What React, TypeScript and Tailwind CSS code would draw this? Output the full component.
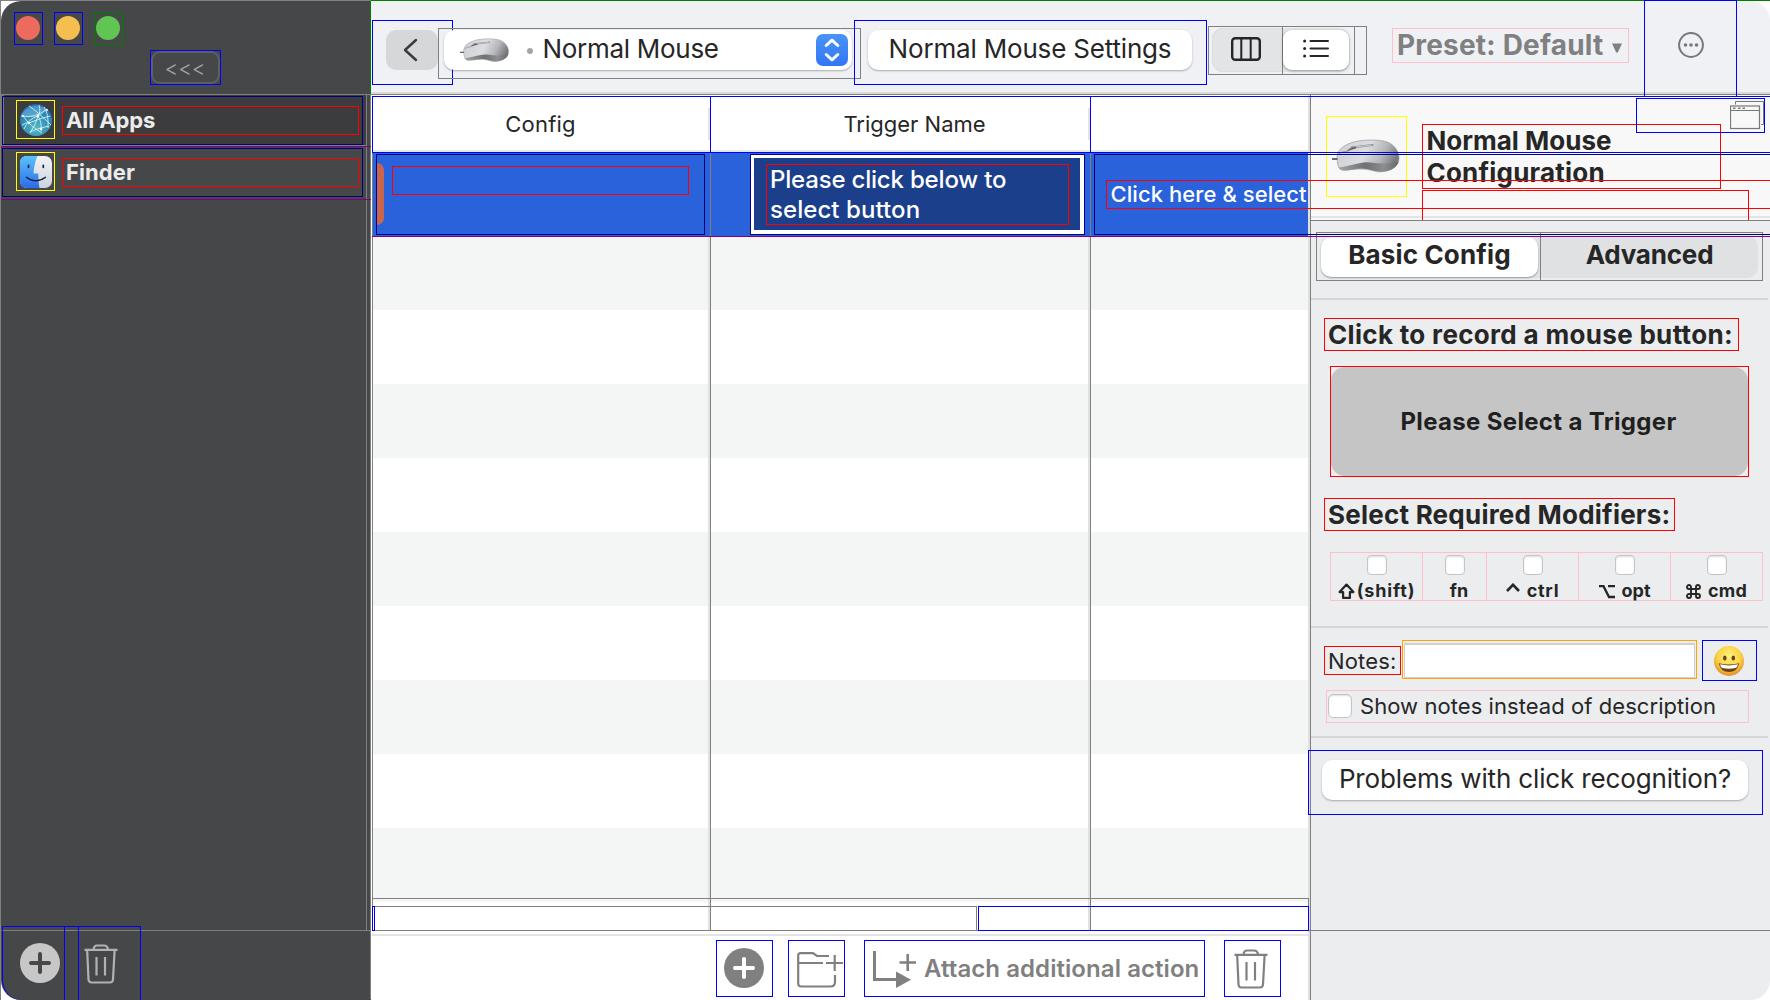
import React from 'react';

function MouseIcon({ className, id }: { className: string; id: string }) {
  return (
    <svg className={className} viewBox="0 0 70 35" preserveAspectRatio="none" fill="none">
      <defs>
        <linearGradient id={`${id}-top`} x1="10" y1="4" x2="60" y2="30" gradientUnits="userSpaceOnUse">
          <stop offset="0" stopColor="#d0d1d4" />
          <stop offset="0.45" stopColor="#dcdde0" />
          <stop offset="0.75" stopColor="#b4b5b9" />
          <stop offset="1" stopColor="#77787c" />
        </linearGradient>
        <linearGradient id={`${id}-side`} x1="6" y1="28" x2="68" y2="28" gradientUnits="userSpaceOnUse">
          <stop offset="0" stopColor="#a5a6aa" />
          <stop offset="0.45" stopColor="#6f7074" />
          <stop offset="0.75" stopColor="#8d8e92" />
          <stop offset="1" stopColor="#66676b" />
        </linearGradient>
      </defs>
      <path d="M7 29 Q10 33 20 31 Q34 29.5 46 33.5 Q60 34.5 67 25 Z" fill="#000" opacity="0.18" />
      <path d="M5.3 16C7 9 14 5 24 2.5C34 .5 48 .5 56 3C64 6 68 13 68 19C68 26 62 32 50 32.5C42 32.5 38 29.5 31 29.5C22 29.5 15 32 10 31C6 30 5 24 5.3 16Z" fill={`url(#${id}-top)`} stroke="#9a9b9f" strokeWidth="0.7" />
      <path d="M6.3 28.5C18 27 26 23.5 36 23.2C48 24 58 26.5 67.6 22.5C66 28 60 32.3 50 32.4C42 32.4 38 29.4 31 29.4C22 29.4 15 32 10 31Q7.5 30.4 6.3 28.5Z" fill={`url(#${id}-side)`} />
      <path d="M20 8.5L41 6" stroke="#8b8c90" strokeWidth="2.2" strokeLinecap="round" />
      <path d="M22 8.2L40 6.1" stroke="#d5d6d9" strokeWidth="0.9" strokeLinecap="round" />
      <path d="M14 13Q17 8.5 24 7.5L24.500 9.500Q19 10.500 14 13Z" fill="#6a6b6f" />
      <path d="M6.500 15Q10 12.500 14 12.500" stroke="#8b8c90" strokeWidth="0.9" />
      <path d="M0 20H5.500" stroke="#4a4a4c" strokeWidth="1.6" />
    </svg>
  );
}

function TrashIcon({ className }: { className: string }) {
  return (
    <svg className={className} viewBox="0 0 34 40" fill="none" stroke="currentColor" strokeWidth="2.2">
      <path d="M0.5 5.8H33.5" />
      <path d="M9.5 5.5Q10 1.5 13 1.5H20Q23.5 1.5 24 5.5" />
      <path d="M3.2 6.5L4.5 35.5Q4.8 38.5 7.5 38.5H26Q28.7 38.5 29 35.5L30.6 6.5" />
      <path d="M12.5 13V31.5M21 13V31.5" />
    </svg>
  );
}

function PlusCircle({ className, stroke }: { className: string; stroke: string }) {
  return (
    <svg className={className} viewBox="0 0 40 40">
      <circle cx="20" cy="20" r="20" fill="currentColor" />
      <path d="M20 11V29M11 20H29" stroke={stroke} strokeWidth="4" strokeLinecap="round" />
    </svg>
  );
}

function GlobeIcon() {
  return (
    <svg className="size-8" viewBox="0 0 32 32" fill="none">
      <defs>
        <radialGradient id="globe-fill" cx="0.5" cy="0.75" r="0.78">
          <stop offset="0" stopColor="#55b9bd" />
          <stop offset="0.5" stopColor="#3592b8" />
          <stop offset="1" stopColor="#1f62aa" />
        </radialGradient>
      </defs>
      <circle cx="16" cy="16" r="16" fill="url(#globe-fill)" />
      <path d="M5 6Q16 -3 27 6Q22 12 15 13Q6 13 1 11Z" fill="#8cd0f5" opacity="0.4" />
      <g stroke="#c9f0fb" strokeWidth="0.9">
        <path d="M1 12Q15 15 27 5M9 2Q18 8 31 21M19 1Q21 8 18 12Q8 15 4 25M18 12Q16 20 10 29M18 12Q22 18 21 27M3 12Q10 22 22 29M9 19Q18 15 30 12M2 21Q6 18 9 19M10 28Q18 24 29 22M24 3Q29 10 28 24" />
      </g>
      <g fill="#fff"><circle cx="18" cy="12" r="1.3" /><circle cx="9" cy="19" r="1.2" /><circle cx="21" cy="25" r="1.3" /><circle cx="27" cy="6" r="1" /><circle cx="3" cy="12" r="1" /></g>
    </svg>
  );
}

function FinderIcon() {
  return (
    <svg className="size-8" viewBox="0 0 32 32" fill="none">
      <defs>
        <linearGradient id="finder-l" x1="0" y1="0" x2="0" y2="32" gradientUnits="userSpaceOnUse"><stop stopColor="#5bc3f8" /><stop offset="1" stopColor="#2d6bea" /></linearGradient>
        <linearGradient id="finder-r" x1="0" y1="0" x2="0" y2="32" gradientUnits="userSpaceOnUse"><stop stopColor="#f3f3f6" /><stop offset="1" stopColor="#ccd3df" /></linearGradient>
      </defs>
      <rect width="32" height="32" rx="7" fill="url(#finder-r)" />
      <path d="M7 0H17.5Q14 8 13.5 17.5H18.3Q18 25 19.5 32H7Q0 32 0 25V7Q0 0 7 0Z" fill="url(#finder-l)" />
      <path d="M8.5 9.3V11.3M23.3 9.3V11.3" stroke="#15223c" strokeWidth="1.7" strokeLinecap="round" />
      <path d="M6.5 21.3Q15.5 28.5 25.5 21.3" stroke="#15223c" strokeWidth="1.4" strokeLinecap="round" />
    </svg>
  );
}

function GrinIcon() {
  return (
    <svg className="size-[30px]" viewBox="0 0 30 30">
      <defs>
        <radialGradient id="grin" cx="0.5" cy="0.35" r="0.65"><stop stopColor="#fff27a" /><stop offset="0.6" stopColor="#fbd147" /><stop offset="1" stopColor="#e0902b" /></radialGradient>
      </defs>
      <circle cx="15" cy="15" r="15" fill="url(#grin)" />
      <ellipse cx="10.8" cy="12" rx="1.8" ry="2.5" fill="#6b3f10" />
      <ellipse cx="19.3" cy="12" rx="1.8" ry="2.5" fill="#6b3f10" />
      <path d="M4.8 17.3Q15 19.8 25.2 17.3Q23.5 26 15 26Q6.5 26 4.8 17.3Z" fill="#6b4417" />
      <path d="M6 18.3Q15 20.5 24 18.3Q23.5 21.5 21.5 22Q15 23.3 8.5 22Q6.5 21.5 6 18.3Z" fill="#fff" />
    </svg>
  );
}

function SidebarRow({ icon, label, className = '' }: { icon: React.ReactNode; label: string; className?: string }) {
  return (
    <div className="ml-px mt-px flex h-[49px] w-[361px] items-start gap-[7px] border border-[#000080] pl-[13px] pt-[3px]">
      <div className="flex size-[39px] shrink-0 items-center justify-center border border-[#ffff00]">{icon}</div>
      <div className={`mt-[6px] h-[29px] w-[297px] border border-[#ff0000] pl-[3px] text-[22px] font-bold leading-[26px] ${className}`}>{label}</div>
    </div>
  );
}

function Sidebar() {
  return (
    <aside className="h-full w-[371px] shrink-0 border-l border-t border-[#808080]">
      <div className="flex h-full flex-col rounded-l-[20px] bg-[#464749] text-[#ececec]">
        <div className="h-[93px] border-r border-[#008000] pl-[13px] pt-[11px]">
          <div className="flex gap-[11px]">
            <div className="h-[33px] w-[29px] border border-[#0000ff] pl-px pt-[3px]"><div className="size-6 rounded-full bg-[#ed6a5e]" /></div>
            <div className="h-[33px] w-[29px] border border-[#0000ff] pl-px pt-[3px]"><div className="size-6 rounded-full bg-[#f5bf4f]" /></div>
            <div className="h-[33px] w-[29px] border border-[#008000] pl-px pt-[3px]"><div className="size-6 rounded-full bg-[#61c554]" /></div>
          </div>
          <div className="ml-[136px] mt-[5px] h-[35px] w-[71px] border border-[#0000ff]">
            <div className="flex h-[33px] items-center justify-center rounded-[9px] border-2 border-[#5e5f62] pr-px pt-[3px] text-[21px] font-light text-[#a4a5a6]">
              &lt;&lt;&lt;
            </div>
          </div>
        </div>
        <div className="flex h-[836px] border-r border-t border-[#808080]">
          <div className="w-[366px] border-r border-[#808080]">
            <div className="-mr-[5px] h-[52px] border-b border-[#800080]">
              <div className="h-[51px] w-[365px] border-b border-b-[#808080] bg-[#3c3c3e] shadow-[inset_4px_0_0_-1px_#77787a]">
                <div className="h-px" />
                <div className="-mt-px"><SidebarRow icon={<GlobeIcon />} label="All Apps" className="tracking-[-0.1px]" /></div>
              </div>
            </div>
            <div className="-mr-[5px] h-[52px] border-b border-[#800080]">
              <SidebarRow icon={<FinderIcon />} label="Finder" className="tracking-[0.1px]" />
            </div>
          </div>
        </div>
        <div className="h-[69px] border-r border-t border-[#808080] pl-px">
          <div className="-mt-[5px] flex h-[74px]">
            <div className="w-[63px] rounded-bl-[20px] border border-b-0 border-[#0000ff] pl-[17px] pt-4 text-[#c7c7c8]"><PlusCircle className="size-10" stroke="#464749" /></div>
            <div className="w-[13px] border-t border-[#0000ff]" />
            <div className="w-[63px] border border-b-0 border-[#0000ff] pl-[5px] pt-[17px] text-[#b2b2b3]"><TrashIcon className="h-10 w-[34px]" /></div>
          </div>
        </div>
      </div>
    </aside>
  );
}

function Toolbar() {
  return (
    <header className="h-[95px] border-b border-t border-b-[#808080] border-t-[#008000] text-[26px] text-[#262626]">
      <div className="flex h-[93px] items-start rounded-tr-[20px] border-b-2 border-[#d8d9db] bg-[#f0f1f4] pl-px">
        <div className="mt-[19px] h-[65px] w-[81px] border border-[#0000ff] pl-[13px] pt-[9px]">
          <div className="flex h-10 w-[52px] items-center justify-center rounded-[10px] bg-[#d6d7d9]">
            <svg className="-ml-1 h-6 w-4" viewBox="0 0 16 24" fill="none" stroke="#3a3a3b" strokeWidth="2.400" strokeLinecap="round" strokeLinejoin="round">
              <path d="M14 2L3 12L14 22" />
            </svg>
          </div>
        </div>
        <div className="-ml-[15px] mt-[27px] h-[51px] w-[423px] border border-[#808080] pl-[5px] pt-px">
          <div className="flex h-10 w-[408px] items-center rounded-[10px] bg-white pl-4 pr-1 shadow-[0_1px_2px_rgba(0,0,0,0.3)]">
            <MouseIcon id="tb" className="h-[25px] w-[50px]" />
            <span className="ml-[17px] mt-px size-[6px] rounded-full bg-[#a5a5a5]" />
            <span className="-mt-[3px] ml-[9.5px] flex-1 leading-9 tracking-[-0.29px]">Normal Mouse</span>
            <span className="flex size-8 items-center justify-center rounded-[7px] bg-linear-to-b from-[#4a94f8] to-[#3175f6]">
              <svg className="h-6 w-[18px]" viewBox="0 0 18 24" fill="none" stroke="#fff" strokeWidth="3" strokeLinecap="round" strokeLinejoin="round">
                <path d="M3.200 7.500L9 2.200L14.800 7.500M3.200 16.500L9 21.800L14.800 16.500" />
              </svg>
            </span>
          </div>
        </div>
        <div className="-ml-[7px] mt-[19px] h-[65px] w-[353px] border border-[#0000ff] pl-[13px] pt-[9px]">
          <div className="h-10 w-[324px] rounded-[10px] bg-white text-center leading-[37px] tracking-[-0.18px] shadow-[0_1px_2px_rgba(0,0,0,0.3)]">Normal Mouse Settings</div>
        </div>
        <div className="ml-px mt-[25px] grid h-[49px] w-[159px] grid-cols-[74px_72px_11px] border border-[#808080]">
          <div className="border-r border-[#808080] pl-[3px] pt-px">
            <div className="flex h-11 items-center rounded-l-[11px] border border-r-0 border-[#dcdddf] bg-[#e3e4e6] pb-[2px] pl-[18px]">
              <svg className="h-6 w-[30px]" viewBox="0 0 30 24" fill="none" stroke="#262626">
                <rect x="1.200" y="1.200" width="27.600" height="21.600" rx="3" strokeWidth="2.400" />
                <path d="M10.300 1V23M19.700 1V23" strokeWidth="2" />
              </svg>
            </div>
          </div>
          <div className="border-r border-[#808080] pt-px">
            <div className="h-11 w-[67px] rounded-r-[11px] bg-[#e3e4e6] pt-[2px]">
              <div className="flex h-10 w-[66px] items-center justify-center rounded-[9px] bg-white pb-[3px] pr-px shadow-[0_1px_3px_rgba(0,0,0,0.35)]">
                <svg className="h-[19px] w-[26px]" viewBox="0 0 26 19" fill="#262626">
                  <circle cx="1.600" cy="2" r="1.500" /><circle cx="1.600" cy="9.500" r="1.500" /><circle cx="1.600" cy="17" r="1.500" />
                  <rect x="6.500" y="1" width="19.500" height="2" rx="1" /><rect x="6.500" y="8.500" width="19.500" height="2" rx="1" /><rect x="6.500" y="16" width="19.500" height="2" rx="1" />
                </svg>
              </div>
            </div>
          </div>
        </div>
        <div className="ml-[25px] mt-[27px] flex h-[35px] w-[237px] items-center whitespace-nowrap border border-[#ffc0cb] pl-[4px] text-[28px] font-bold leading-[33px] tracking-[0.19px] text-[#7f8082]">
          Preset: Default
          <svg className="ml-[9px] mt-[5px] size-[10px]" viewBox="0 0 10 10" fill="currentColor"><path d="M0 .5H10L5.800 9.500H4.200Z" /></svg>
        </div>
        <div className="relative z-10 -mt-px ml-[15px] flex h-[97px] w-[93px] justify-center border border-[#0000ff] pt-[31px]">
          <svg className="size-[26px] text-[#77787a]" viewBox="0 0 26 26" fill="none">
            <circle cx="13" cy="13" r="11.900" stroke="currentColor" strokeWidth="2" />
            <g fill="currentColor"><circle cx="7.500" cy="13" r="1.800" /><circle cx="13" cy="13" r="1.800" /><circle cx="18.500" cy="13" r="1.800" /></g>
          </svg>
        </div>
      </div>
    </header>
  );
}

const stripes = [
  'h-[73px] bg-[#f4f5f5]',
  'h-[74px] bg-white',
  'h-[74px] bg-[#f4f5f5]',
  'h-[74px] bg-white',
  'h-[74px] bg-[#f4f5f5]',
  'h-[74px] bg-white',
  'h-[74px] bg-[#f4f5f5]',
  'h-[74px] bg-white',
  'h-[70px] bg-[#f4f5f5]',
];

function ColumnCells() {
  return (
    <>
      <div className="border-l border-r-2 border-l-[#808080] border-r-[#e0e1e2]" />
      <div className="border-l border-r-2 border-l-[#808080] border-r-[#e0e1e2]" />
      <div className="border-l border-[#808080]" />
    </>
  );
}

function TriggerTable() {
  return (
    <main className="flex w-[937px] shrink-0 flex-col bg-white pl-px">
      <div className="h-[57px] bg-white pt-px shadow-[inset_0_-2px_0_#e5e6e9]">
        <div className="relative z-10 grid h-[57px] w-[1400px] grid-cols-[337px_380px_1fr] border border-[#0000ff] text-center text-[22px] leading-8 text-[#262626]">
          <div className="pt-[11px]"><div className="h-8 border-r-2 border-[#e3e3e6] tracking-[0.19px]">Config</div></div>
          <div className="border-l border-[#0000ff] pt-[11px]"><div className="h-8 border-r-2 border-[#e3e3e6] pl-[30px]">Trigger Name</div></div>
          <div className="border-l border-[#0000ff]" />
        </div>
      </div>

      <div className="grid h-[84px] grid-cols-[338px_380px_218px] bg-[#2962db] font-medium text-white">
        <div className="border-l border-[#808080] pl-[3px] pt-[2px]">
          <div className="flex h-[81px] w-[329px] items-start gap-2 border border-[#000080] pt-2">
            <div className="h-[62px] w-[7px] rounded-r-[7px] bg-[#c9644d]" />
            <div className="mt-[3px] h-[29px] w-[297px] border border-[#ff0000]" />
          </div>
        </div>
        <div className="border-l border-[#808080] pl-[39px] pt-[2px]">
          <div className="h-[81px] w-[335px] border border-[#000080]">
            <div className="h-[79px] border-b-4 border-l-[3px] border-r-4 border-t-[3px] border-white bg-[#1b3f8b] pl-3 pt-[6px]">
              <div className="h-[61px] w-[303px] border border-[#ff0000] pl-[3px] text-[24px] leading-[30px]">
                <div className="tracking-[-0.19px]">Please click below to</div>
                <div className="tracking-[0.07px]">select button</div>
              </div>
            </div>
          </div>
        </div>
        <div className="border-l border-[#808080] pl-[3px] pt-[2px]">
          <div className="relative z-10 h-[81px] w-[700px] border border-[#000080] pl-[11px] pt-[25px]">
            <div className="h-[29px] w-[700px] whitespace-nowrap border border-[#ff0000] pl-[3.5px] text-[22px] leading-[27px] tracking-[0.07px]">Click here &amp; select</div>
          </div>
        </div>
      </div>

      <div className="relative z-10 h-px w-[1400px] bg-[#800080]" />
      {stripes.map((tone, i) => (
        <div key={i} className={`grid grid-cols-[338px_380px_218px] ${tone}`}>
          <ColumnCells />
        </div>
      ))}

      <div className="relative z-10 grid h-[33px] w-[937px]">
        <div className="col-start-1 row-start-1 grid grid-cols-[338px_380px_1fr] border border-l-0 border-[#808080] shadow-[inset_0_3px_0_#f4f5f5]">
          <ColumnCells />
        </div>
        <div className="col-start-1 row-start-1 flex pt-2">
          <div className="h-[25px] w-[3px] border border-[#0000ff]" />
          <div className="mr-px h-[25px] w-[602px] border border-l-0 border-[#808080]" />
          <div className="h-[25px] w-[331px] border border-[#0000ff]" />
        </div>
      </div>

      <div className="flex-1 pt-[3px]">
        <div className="flex items-start border-t-2 border-[#e4e4e5] pl-[344px] pt-1 text-[#808080]">
          <div className="size-[57px] border border-[#0000ff] p-[7px]"><PlusCircle className="size-10" stroke="#fff" /></div>
          <div className="ml-[15px] size-[57px] border border-[#0000ff] pl-2 pt-[11px]">
            <svg className="h-[36px] w-[46px]" viewBox="0 0 46 36" fill="none" stroke="currentColor" strokeWidth="2.200">
              <path d="M32 4H20L16 1.200H3.500Q1.200 1.200 1.200 3.500V31.500Q1.200 34.500 4.200 34.500H33.500Q38 34.500 38 30V23" />
              <path d="M1.500 11H26M29 11H46M37.700 3V19" />
            </svg>
          </div>
          <div className="ml-[19px] flex h-[57px] w-[341px] items-start border border-[#0000ff] pl-2">
            <svg className="mt-[10px] h-[37px] w-[43px] shrink-0" viewBox="0 0 43 37" fill="none" stroke="currentColor" strokeWidth="3">
              <path d="M1.500 0V28.500H25" />
              <path d="M23 20.500L38 28.700L23 37Z" fill="currentColor" stroke="none" />
              <path d="M26.500 11.500H43M34.700 3V20" strokeWidth="2.600" />
            </svg>
            <span className="ml-2 whitespace-nowrap text-[24px] font-semibold leading-[56px] tracking-[0.07px]">Attach additional action</span>
          </div>
          <div className="ml-[19px] size-[57px] border border-[#0000ff] pl-[9px] pt-2"><TrashIcon className="h-10 w-[34px]" /></div>
        </div>
      </div>
    </main>
  );
}

function Rule() {
  return <div className="mr-[2px] h-[2px] shrink-0 bg-[#d5d6d9]" />;
}

const check = 'bg-white border border-[#c4c5c7] shadow-[inset_0_1px_2px_rgba(0,0,0,0.14)]';

function Modifier({ icon, label, className = '' }: { icon?: React.ReactNode; label: string; className?: string }) {
  return (
    <div className="flex h-[49px] flex-col items-center border border-r-0 border-[#ffc0cb] pt-[2px] last:border-r">
      <span className={`size-5 shrink-0 rounded-[4px] ${check}`} />
      <span className={`mt-[6px] flex h-5 items-center whitespace-nowrap text-[18px] font-bold leading-5 ${className}`}>
        {icon}
        {label}
      </span>
    </div>
  );
}

function Inspector() {
  return (
    <div className="flex-1 border-l-2 border-[#dfe0e2]">
      <section className="flex h-full flex-col rounded-br-[20px] border-l border-[#808080] bg-[#ecedef] text-[#262626]">
        <div className="h-[126px] shrink-0 border-b border-[#808080] bg-[#f8f8f8]">
          <div className="flex h-[123px] items-start border-b-2 border-[#e3e3e4] pl-[15px]">
            <div className="mt-[21px] size-[81px] shrink-0 border border-[#ffff00] pl-[5px] pt-[22px]">
              <MouseIcon id="insp" className="h-[35px] w-[69px]" />
            </div>
            <div className="ml-[15px] mt-[29px] w-[327px] shrink-0">
              <div className="h-[65px] w-[299px] border border-[#ff0000] pl-[3.5px] text-[26px] font-bold leading-8">
                <div>Normal Mouse</div>
                <div className="tracking-[0.21px]">Configuration</div>
              </div>
              <div className="mt-px h-[30px] border border-b-0 border-[#ff0000]" />
            </div>
            <div className="-ml-[113px] mt-[3px] flex h-[35px] w-[129px] shrink-0 items-start justify-end border border-[#0000ff] pt-[2px]">
              <svg className="-mr-px h-[29px] w-[35px]" viewBox="0 0 35 29" fill="none" stroke="#77787a">
                <path d="M5.500 3.500V.5H33.500V23.500H31" />
                <rect x=".5" y="5" width="29" height="22.500" strokeWidth="1.200" />
                <path d="M1 9.500H29" />
                <path d="M3 7.200H5.500M8 7.200H10.500M12.500 7.200H15" strokeWidth="1.500" />
              </svg>
            </div>
          </div>
        </div>

        <div className="ml-[5px] mt-[11px] grid h-[49px] w-[447px] shrink-0 grid-cols-[224px_1fr] border border-[#808080] text-center text-[26px] font-bold">
          <div className="border-r border-[#808080] pl-1 pt-[3px]">
            <div className="h-[42px] rounded-l-[11px] bg-[#e0e1e3] pt-px">
              <div className="h-10 w-[217px] rounded-[10px] bg-white leading-[35px] tracking-[0.15px] shadow-[0_1px_2px_rgba(0,0,0,0.35)]">Basic Config</div>
            </div>
          </div>
          <div className="pt-[3px]">
            <div className="h-[42px] w-[217px] rounded-r-[11px] bg-[#e0e1e3] leading-[37px] tracking-[-0.2px]">Advanced</div>
          </div>
        </div>

        <div className="mt-[17px]"><Rule /></div>

        <div className="ml-[13px] mt-[18px] h-[33px] w-[415px] shrink-0 whitespace-nowrap border border-[#ff0000] pl-[3px] text-[26px] font-bold leading-8 tracking-[0.32px]">Click to record a mouse button:</div>
        <div className="ml-[19px] mt-[15px] h-[111px] w-[419px] shrink-0 border border-[#ff0000]">
          <div className="h-[109px] rounded-[14px] bg-[#c5c5c5] pr-[2px] text-center text-[24px] font-bold leading-[110px] tracking-[0.33px] text-[#1f1f1f]">Please Select a Trigger</div>
        </div>
        <div className="ml-[13px] mt-[21px] h-[33px] w-[351px] shrink-0 whitespace-nowrap border border-[#ff0000] pl-[3px] text-[26px] font-bold leading-[31px] tracking-[0.23px]">Select Required Modifiers:</div>

        <div className="ml-[19px] mt-[21px] grid grid-cols-[92px_64px_92px_92px_93px]">
          <Modifier
            label="(shift)"
            className="tracking-[0.83px]"
            icon={<svg className="mr-[2px] size-[17px]" viewBox="0 0 16 16" fill="none" stroke="currentColor" strokeWidth="2.100"><path d="M8 1.500L1.500 8.500H4.800V14H11.200V8.500H14.500Z" strokeLinejoin="round" /></svg>}
          />
          <Modifier label="fn" className="pl-[9px]" />
          <Modifier label="ctrl" className="tracking-[0.74px]" icon={<svg className="mb-[8px] mr-[7px] h-[9px] w-[14px]" viewBox="0 0 14 9" fill="none" stroke="currentColor" strokeWidth="2.600"><path d="M1 8L7 1.800L13 8" /></svg>} />
          <Modifier label="opt" icon={<svg className="mr-[7px] h-[15px] w-4" viewBox="0 0 16 15" fill="none" stroke="currentColor" strokeWidth="2.300"><path d="M0 2.200H4.500L10 13H16M9 2.200H16" /></svg>} />
          <Modifier
            label="cmd"
            className="tracking-[0.24px]"
            icon={<svg className="mr-[7px] size-[15px]" viewBox="0 0 15 15" fill="none" stroke="currentColor" strokeWidth="1.900"><path d="M5 5H10V10H5ZM5 5V3A2 2 0 1 0 3 5H5M10 5H12A2 2 0 1 0 10 3V5M10 10V12A2 2 0 1 0 12 10H10M5 10H3A2 2 0 1 0 5 12V10" /></svg>}
          />
        </div>

        <div className="mt-[25px]"><Rule /></div>

        <div className="ml-[13px] mt-3 flex items-start text-[22px]">
          <div className="mt-[6px] h-[29px] w-[77px] border border-[#ff0000] pl-[3px] leading-[28px] tracking-[0.16px]">Notes:</div>
          <div className="ml-px h-[39px] w-[295px] border border-[#ffa500] pl-px pr-px pt-[2px]">
            <div className="h-[35px] border border-t-2 border-[#cfd0d2] bg-white" />
          </div>
          <div className="ml-[5px] h-[41px] w-[55px] border border-[#0000ff] pl-[11px] pt-[5px]"><GrinIcon /></div>
        </div>
        <div className="ml-[15px] mt-[9px] flex h-[33px] w-[423px] shrink-0 items-start gap-2 border border-[#ffc0cb] pl-px pt-[3px] text-[22px]">
          <span className={`size-6 shrink-0 rounded-[5px] ${check}`} />
          <span className="whitespace-nowrap leading-6 tracking-[0.06px]">Show notes instead of description</span>
        </div>

        <div className="mt-[13px]"><Rule /></div>

        <div className="-ml-[3px] mt-3 h-[65px] w-[455px] shrink-0 border border-[#0000ff] pl-[13px] pt-[9px]">
          <div className="h-10 w-[426px] rounded-[10px] bg-white text-center text-[26px] leading-[37px] tracking-[-0.15px] shadow-[0_1px_2px_rgba(0,0,0,0.3)]">Problems with click recognition?</div>
        </div>

        <div className="flex-1" />
        <div className="-ml-[2px] h-[70px] shrink-0 border-t border-[#808080]" />
      </section>
    </div>
  );
}

export default function App() {
  return (
    <div className="flex h-[1000px] w-[1770px] overflow-hidden bg-white font-['Inter',sans-serif]">
      <Sidebar />
      <div className="flex w-[1399px] shrink-0 flex-col">
        <Toolbar />
        <div className="flex flex-1">
          <TriggerTable />
          <Inspector />
        </div>
      </div>
    </div>
  );
}
